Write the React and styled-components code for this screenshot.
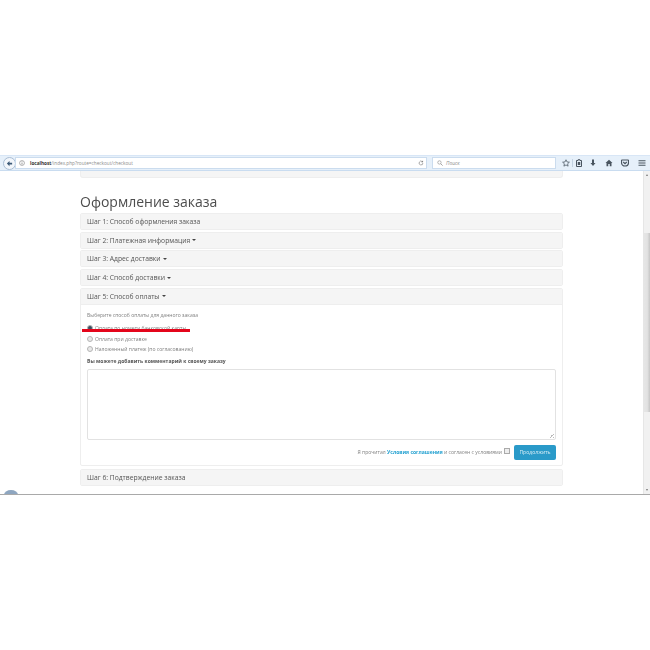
import styled, { createGlobalStyle } from "styled-components";

const Global = createGlobalStyle`
  html, body {
    margin: 0;
    background: #fff;
    font-family: "Open Sans", "Liberation Sans", sans-serif;
    color: #555;
  }
`;

const Shot = styled.div`
  position: relative;
  margin-top: 155px;
  width: 650px;
  height: 340px;
  overflow: hidden;
  display: flex;
  flex-direction: column;
  border-bottom: 1px solid #a9a9a9;
  box-sizing: border-box;
  filter: blur(0.45px);
`;

// browser chrome
const Toolbar = styled.div`
  flex: none;
  height: 16px;
  background: #e6f0fa;
  border-top: 1px solid #d8e6f6;
  border-bottom: 1px solid #c9dcf0;
  box-sizing: border-box;
  display: flex;
  align-items: center;
  padding-left: 3px;
`;

const BackButton = styled.div`
  flex: none;
  width: 13px;
  height: 13px;
  border-radius: 50%;
  background: #f2f6fb;
  border: 1px solid #a9bdd4;
  box-sizing: border-box;
  display: flex;
  align-items: center;
  justify-content: center;
`;

const UrlBar = styled.div`
  flex: none;
  width: 412px;
  height: 12px;
  margin-left: -1px;
  background: #fff;
  border: 1px solid #cbdcee;
  box-sizing: border-box;
  display: flex;
  align-items: center;
  padding: 0 2px 0 3px;
  font-size: 4.7px;
  color: #8a8a8a;
  white-space: nowrap;
`;

const Host = styled.b`
  color: #333;
  font-weight: 700;
`;

const UrlText = styled.span`
  flex: 1;
  margin-left: 5px;
`;

const SearchBar = styled.div`
  flex: none;
  width: 124px;
  height: 12px;
  margin-left: 5px;
  background: #fff;
  border: 1px solid #cbdcee;
  box-sizing: border-box;
  display: flex;
  align-items: center;
  gap: 3px;
  padding-left: 4px;
  font-size: 5px;
  font-style: italic;
  color: #8f8f8f;
`;

const ToolIcons = styled.div`
  flex: 1;
  display: flex;
  align-items: center;
  color: #4a5560;
`;

const ToolSlot = styled.span`
  display: flex;
  margin-left: ${(p) => p.$left}px;
`;

const Sep = styled.span`
  width: 1px;
  height: 8px;
  margin-left: 2px;
  background: #c3d2e2;
`;

const Viewport = styled.div`
  flex: 1;
  display: flex;
  min-height: 0;
`;

const Content = styled.div`
  flex: 1;
  padding: 0 80px;
  display: flex;
  flex-direction: column;
`;

const Cut = styled.div`
  height: 6px;
  background: #f5f5f5;
  border: 1px solid #eee;
  border-top: 0;
  border-radius: 0 0 3px 3px;
`;

const Title = styled.h1`
  margin: 15px 0 0;
  height: 18px;
  font-size: 14px;
  line-height: 18px;
  font-weight: 400;
  color: #4d4d4d;
`;

const Panel = styled.div`
  margin-top: ${(p) => p.$gap}px;
  background: #fff;
  border: 1px solid #eee;
  border-radius: 2px;
`;

const PanelHead = styled.div`
  height: 15px;
  background: #f5f5f5;
  padding-left: 6px;
  font-size: 6.75px;
  color: #555;
  display: flex;
  align-items: center;
`;

const Caret = styled.i`
  display: inline-block;
  margin-left: 2px;
  border-top: 2.5px solid #444;
  border-left: 2px solid transparent;
  border-right: 2px solid transparent;
`;

const PanelBody = styled.div`
  height: 161px;
  padding: 6px 6px 0;
  box-sizing: border-box;
  border-top: 1px solid #eee;
  font-size: 5.05px;
  color: #808080;
  display: flex;
  flex-direction: column;
`;

const Hint = styled.div`
  height: 8px;
  line-height: 8px;
  margin-bottom: 4px;
`;

const RadioRow = styled.label`
  height: 10.5px;
  display: flex;
  align-items: center;
  gap: 2px;
`;

const Radio = styled.span`
  width: 6px;
  height: 6px;
  box-sizing: border-box;
  border-radius: 50%;
  border: 1px solid #b5b5b5;
  background: ${(p) => (p.$on ? "#3c4f63" : "#e9e9e9")};
`;

const CommentLabel = styled.div`
  margin-top: 3px;
  height: 9px;
  line-height: 9px;
  font-weight: 700;
  color: #555;
`;

const CommentBox = styled.div`
  position: relative;
  margin-top: 3px;
  height: 69px;
  border: 1px solid #e2e2e2;
  border-radius: 2px;
  background: #fff;
`;

const Grip = styled.span`
  position: absolute;
  right: 1px;
  bottom: 1px;
  width: 5px;
  height: 5px;
  background: linear-gradient(135deg, transparent 50%, #bbb 50%, #bbb 65%, transparent 65%, transparent 80%, #bbb 80%);
`;

const Actions = styled.div`
  margin-top: 4px;
  display: flex;
  align-items: center;
  justify-content: flex-end;
  height: 16px;
`;

const Agree = styled.span`
  color: #808080;
`;

const TermsLink = styled.b`
  color: #23a1d1;
  font-weight: 700;
`;

const Check = styled.span`
  width: 6px;
  height: 6px;
  box-sizing: border-box;
  margin: 0 4px 3px 2px;
  border: 1px solid #aaa;
  background: #eee;
`;

const Submit = styled.button`
  width: 42px;
  height: 15px;
  padding: 0;
  border: 0;
  border-radius: 2px;
  background: #2a9ac9;
  color: #d8eef7;
  font: 5.1px "Open Sans", sans-serif;
`;

const Scrollbar = styled.div`
  flex: none;
  width: 7px;
  background: #f1f1f1;
  border-left: 1px solid #e6e6e6;
  box-sizing: border-box;
  position: relative;
`;

const Thumb = styled.div`
  position: absolute;
  left: 0;
  right: 0;
  top: 62px;
  height: 179px;
  background: linear-gradient(90deg, #e6e6e6, #e2e2e2 55%, #c6c6c6);
`;

const Arrow = styled.i`
  position: absolute;
  left: 1.5px;
  ${(p) => (p.$down ? "bottom: 3px;" : "top: 3px;")}
  border-left: 1.5px solid transparent;
  border-right: 1.5px solid transparent;
  ${(p) => (p.$down ? "border-top: 2px solid #777;" : "border-bottom: 2px solid #777;")}
`;

const Dock = styled.div`
  position: absolute;
  left: 4px;
  bottom: -6px;
  width: 14px;
  height: 10px;
  border-radius: 50%;
  background: #8ea6c0;
`;

// hand-drawn annotation on top of the screenshot
const RedMark = styled.div`
  position: absolute;
  left: 82px;
  top: 174px;
  width: 108px;
  height: 3px;
  background: #e4051b;
`;

const Ico = ({ children, size = 8 }) => (
  <svg width={size} height={size} viewBox="0 0 16 16" fill="currentColor">
    {children}
  </svg>
);

const steps = [
  { label: "Шаг 1: Способ оформления заказа" },
  { label: "Шаг 2: Платежная информация", caret: true },
  { label: "Шаг 3: Адрес доставки", caret: true },
  { label: "Шаг 4: Способ доставки", caret: true },
];

export default function App() {
  return (
    <>
      <Global />
      <Shot>
        <Toolbar>
          <BackButton>
            <Ico size={7}>
              <path d="M8 2 2 8l6 6V10h6V6H8z" fill="#3d5a78" />
            </Ico>
          </BackButton>
          <UrlBar>
            <Ico size={6}>
              <circle cx="8" cy="8" r="6.500" fill="none" stroke="#777" strokeWidth="1.500" />
              <path d="M7 7h2v5H7zM7 4h2v2H7z" fill="#777" />
            </Ico>
            <UrlText>
              <Host>localhost</Host>/index.php?route=checkout/checkout
            </UrlText>
            <Ico size={6}>
              <path d="M13 8a5 5 0 1 1-1.500-3.500" fill="none" stroke="#777" strokeWidth="1.600" />
              <path d="M13.500 1v5h-5z" fill="#777" />
            </Ico>
          </UrlBar>
          <SearchBar>
            <Ico size={6}>
              <circle cx="6.500" cy="6.500" r="4.500" fill="none" stroke="#888" strokeWidth="1.600" />
              <path d="m10 10 5 5" stroke="#888" strokeWidth="2" />
            </Ico>
            Поиск
          </SearchBar>
          <ToolIcons>
            <ToolSlot $left={6}>
              <Ico>
                <path d="m8 1.500 2 4.400 4.800.5-3.600 3.200 1 4.700L8 11.900l-4.200 2.400 1-4.700L1.200 6.400 6 5.900z" fill="none" stroke="currentColor" strokeWidth="1.500" />
              </Ico>
            </ToolSlot>
            <Sep />
            <ToolSlot $left={2}>
              <Ico>
                <path d="M3 3h3V1.500h4V3h3v12H3z" fill="none" stroke="currentColor" strokeWidth="2" />
                <path d="M5.500 6h5v6h-5z" />
              </Ico>
            </ToolSlot>
            <ToolSlot $left={6}>
              <Ico>
                <path d="M6 1h4v7h3l-5 6-5-6h3z" />
              </Ico>
            </ToolSlot>
            <ToolSlot $left={8}>
              <Ico>
                <path d="M8 1.500 15 8h-2v6.500H9.500V10h-3v4.500H3V8H1z" />
              </Ico>
            </ToolSlot>
            <ToolSlot $left={8}>
              <Ico>
                <path d="M2 2h12a1 1 0 0 1 1 1v4a7 7 0 0 1-14 0V3a1 1 0 0 1 1-1zm2.500 4L8 9.500 11.500 6" fill="none" stroke="currentColor" strokeWidth="2.400" />
              </Ico>
            </ToolSlot>
            <ToolSlot $left={9}>
              <Ico>
                <path d="M1 2.500h14v2.200H1zM1 7h14v2.200H1zM1 11.500h14v2.200H1z" />
              </Ico>
            </ToolSlot>
          </ToolIcons>
        </Toolbar>
        <Viewport>
          <Content>
            <Cut />
            <Title>Оформление заказа</Title>
            {steps.map((s) => (
              <Panel key={s.label} $gap={1.75}>
                <PanelHead>
                  {s.label}
                  {s.caret && <Caret />}
                </PanelHead>
              </Panel>
            ))}
            <Panel $gap={1.75}>
              <PanelHead>
                Шаг 5: Способ оплаты
                <Caret />
              </PanelHead>
              <PanelBody>
                <Hint>Выберите способ оплаты для данного заказа</Hint>
                <RadioRow>
                  <Radio $on />
                  Оплата по номеру банковской карты
                </RadioRow>
                <RadioRow>
                  <Radio />
                  Оплата при доставке
                </RadioRow>
                <RadioRow>
                  <Radio />
                  Наложенный платеж (по согласованию)
                </RadioRow>
                <CommentLabel>Вы можете добавить комментарий к своему заказу</CommentLabel>
                <CommentBox>
                  <Grip />
                </CommentBox>
                <Actions>
                  <Agree>
                    Я прочитал <TermsLink>Условия соглашения</TermsLink> и согласен с условиями
                  </Agree>
                  <Check />
                  <Submit>Продолжить</Submit>
                </Actions>
              </PanelBody>
            </Panel>
            <Panel $gap={3}>
              <PanelHead>Шаг 6: Подтверждение заказа</PanelHead>
            </Panel>
          </Content>
          <Scrollbar>
            <Arrow />
            <Thumb />
            <Arrow $down />
          </Scrollbar>
        </Viewport>
        <Dock />
        <RedMark />
      </Shot>
    </>
  );
}
